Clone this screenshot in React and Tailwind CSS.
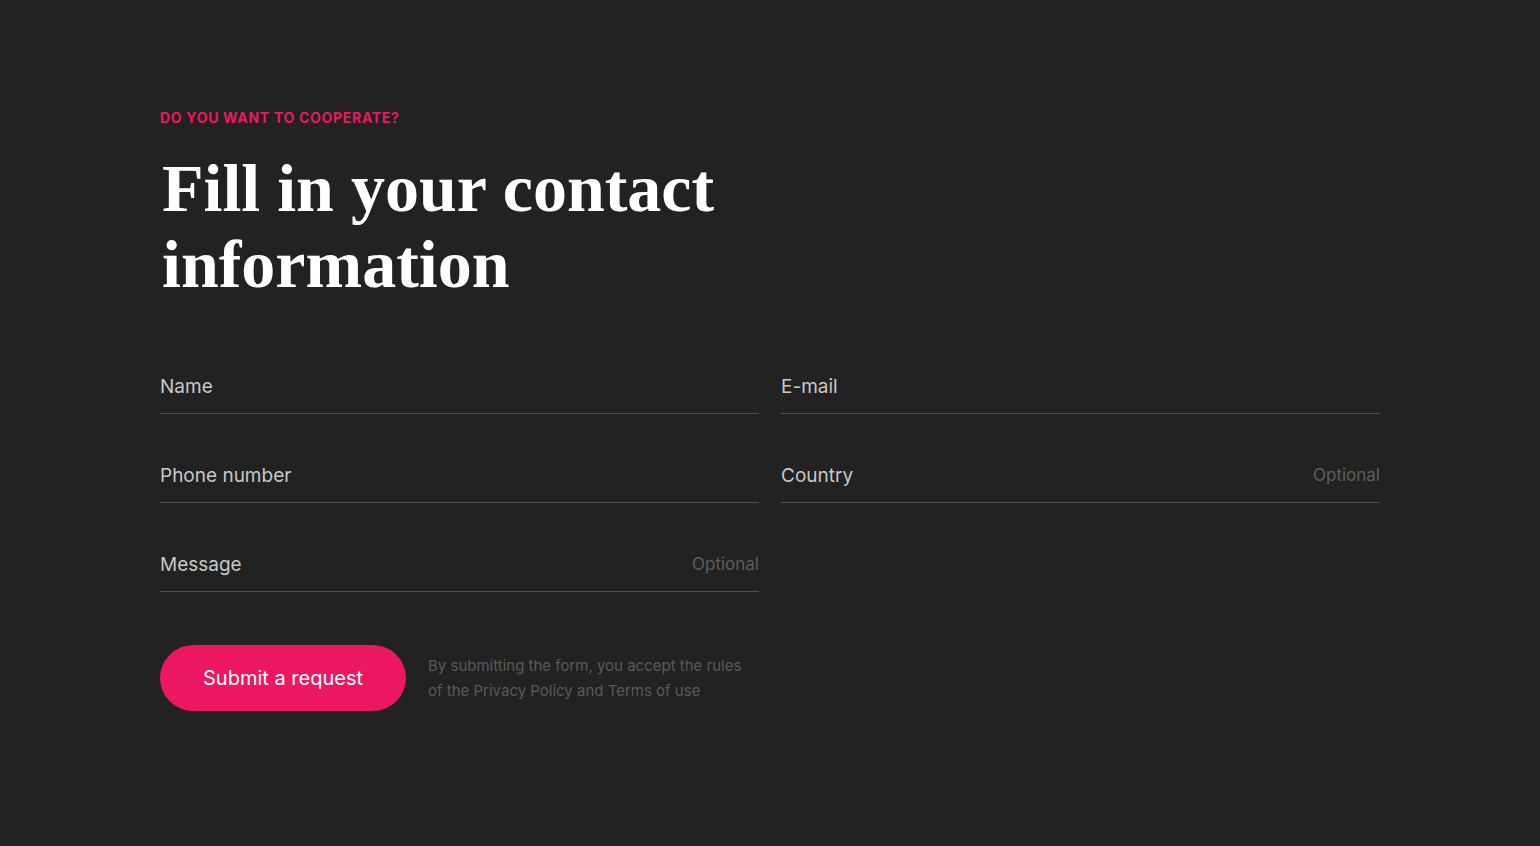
import React from "react";

function Field({ label, optional }) {
  return (
    <div className="flex items-center justify-between h-[89px] pt-[36px] border-b border-[#4f4f4f]" >
      <span className="text-[19px] text-[#c8c8c8]">{label}</span>
      {optional && <span className="text-[17px] text-[#5e5e5e]">Optional</span>}
    </div>
  );
}

export default function App() {
  return (
    <div className="min-h-[846px] w-full bg-[#222222] px-[160px] pt-[108px]" style={{ fontFamily: "Inter, 'Noto Sans', sans-serif" }}>
      <div className="text-[14px] font-bold tracking-[0.05em] text-[#ec1763] uppercase leading-[20px]">Do you want to cooperate?</div>
      <h1 className="mt-[22px] ml-[2px] text-[68px] leading-[76px] text-white font-bold" style={{ fontFamily: "'Liberation Serif', 'DejaVu Serif', serif" }}>
        Fill in your contact
        <br />
        information
      </h1>
      <div className="mt-[23px] grid grid-cols-2 gap-x-[22px] w-[1220px]">
        <Field label="Name" />
        <Field label="E-mail" />
        <Field label="Phone number" />
        <Field label="Country" optional />
        <Field label="Message" optional />
        <div />
      </div>
      <div className="mt-[53px] flex items-center gap-[22px]">
        <button className="w-[246px] h-[66px] rounded-full bg-[#ec1763] text-white text-[20px] font-normal">Submit a request</button>
        <p className="text-[15px] leading-[25px] text-[#5a5a5a] w-[330px]">
          By submitting the form, you accept the rules of the Privacy Policy and Terms of use
        </p>
      </div>
    </div>
  );
}
